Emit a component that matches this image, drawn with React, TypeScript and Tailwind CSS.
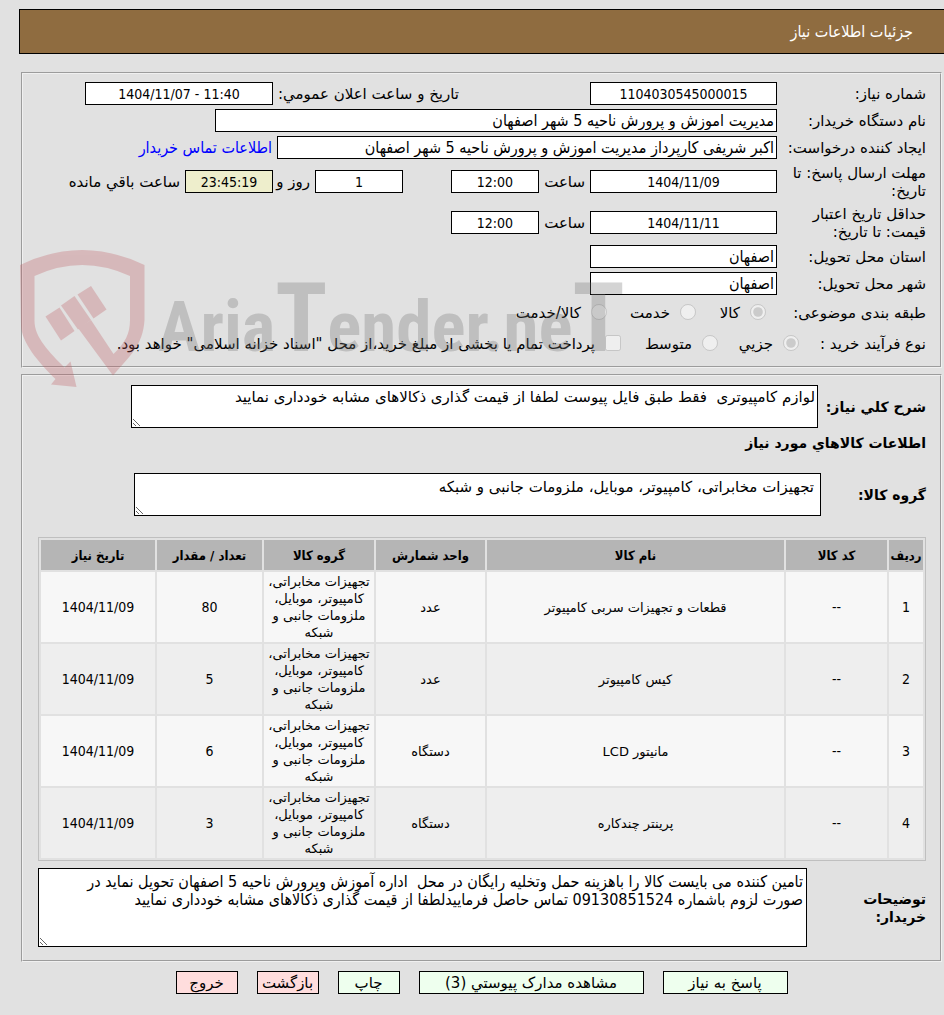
import type { ReactNode } from 'react';

interface NeedItem {
  id: number;
  code: string;
  name: string;
  unit: string;
  group: string;
  quantity: number;
  date: string;
}

const goodsGroup = 'تجهیزات مخابراتی، کامپیوتر، موبایل، ملزومات جانبی و شبکه';

const items: NeedItem[] = [
  { id: 1, code: '--', name: 'قطعات و تجهیزات سربی کامپیوتر', unit: 'عدد', group: goodsGroup, quantity: 80, date: '1404/11/09' },
  { id: 2, code: '--', name: 'کیس کامپیوتر', unit: 'عدد', group: goodsGroup, quantity: 5, date: '1404/11/09' },
  { id: 3, code: '--', name: 'مانیتور LCD', unit: 'دستگاه', group: goodsGroup, quantity: 6, date: '1404/11/09' },
  { id: 4, code: '--', name: 'پرینتر چندکاره', unit: 'دستگاه', group: goodsGroup, quantity: 3, date: '1404/11/09' }
];

const columns = [
  { title: 'ردیف', width: 'w-[34px]' },
  { title: 'کد کالا', width: 'w-[101px]' },
  { title: 'نام کالا', width: '' },
  { title: 'واحد شمارش', width: 'w-[109px]' },
  { title: 'گروه کالا', width: 'w-[110px]' },
  { title: 'تعداد / مقدار', width: 'w-[105px]' },
  { title: 'تاریخ نیاز', width: 'w-[114px]' }
];

const condensed = "font-['DejaVu_Sans_Condensed','DejaVu_Sans',sans-serif] text-[14px]";
const condensedLarge = "font-['DejaVu_Sans_Condensed','DejaVu_Sans',sans-serif] text-[16px]";
const boxClass = `h-[23px] border border-black bg-white px-[2px] leading-[18px] ${condensedLarge}`;
const numberClass = `h-[23px] border border-black bg-white text-center ${condensed}`;
const areaClass = 'block border border-black bg-white leading-[18px]';
const panelClass = 'mr-[2px] ml-[21px] border-2 [border-style:groove] border-[#f0f0f0] pr-[14px]';

function Row({ label, htmlFor, tall, children }: { label: string; htmlFor: string; tall?: boolean; children: ReactNode }) {
  return (
    <div className={`flex items-center ${tall ? 'h-[41px]' : 'h-[27px]'}`}>
      <label htmlFor={htmlFor} className="ml-[9px] w-[140px] shrink-0">{label}</label>
      {children}
    </div>
  );
}

function Option({ id, name, label, type = 'radio', checked = false, className = '' }: {
  id: string;
  name: string;
  label: string;
  type?: 'radio' | 'checkbox';
  checked?: boolean;
  className?: string;
}) {
  return (
    <span className={`flex shrink-0 items-center gap-[10px] ${className}`}>
      <input id={id} name={name} type={type} defaultChecked={checked} disabled className="mb-[2px] size-4 shrink-0" />
      <label htmlFor={id} className="whitespace-nowrap">{label}</label>
    </span>
  );
}

// Shield with gavel and the site name, laid over the form
function Watermark() {
  return (
    <svg
      className="pointer-events-none absolute top-[245px] left-[15px] h-[150px] w-[620px]"
      viewBox="15 245 620 150"
      direction="ltr"
      aria-hidden="true"
    >
      <g fill="rgb(192,92,98)" opacity="0.3">
        <path d="M20 265Q82 235 144.500 265V320C143 345 130 356 113 375.500L78 328L91 320L113.500 354C125 343 130 334 130 320V276Q82 254 34.500 276V320C34 337 49 352 64.500 367.500L70.500 361.500L76.500 387L51 384.500L55.500 379C39 363 21 342 21 325Z" />
        <path d="M45.500 316.500L59.500 307.500L74.500 331L61 340.500Z" />
        <path d="M61 305.500L74.500 296L91 320L78 329.500Z" />
        <path d="M77.500 294.500L91 286L106.500 309.500L93.500 318.500Z" />
      </g>
      <g fill="rgb(115,115,115)" opacity="0.3" fontWeight="700" fontFamily='"Roboto Condensed", Roboto, "Liberation Sans", sans-serif'>
        <text x="158" y="351" fontSize="71">
          Aria<tspan fontSize="96">T</tspan>ender.ne<tspan fontSize="96">T</tspan>
        </text>
      </g>
    </svg>
  );
}

export default function App() {
  return (
    <div
      dir="rtl"
      className="relative min-h-screen overflow-x-hidden bg-[#e1e1e1] pt-[9px] pb-5 font-['DejaVu_Sans',sans-serif] text-[15px] leading-[18px] text-black"
    >
      <header className="ml-[19px] flex h-[45px] items-center border-y border-l border-black bg-[#8f6c40] pr-[31px] text-white">
        <h1 className={condensedLarge}>جزئیات اطلاعات نیاز</h1>
      </header>

      {/* General information */}
      <section className={`${panelClass} mt-[18px] pt-[6px] pb-[7px]`}>
        <Row label="شماره نیاز:" htmlFor="needNo">
          <input id="needNo" readOnly defaultValue="1104030545000015" className={`${numberClass} w-[187px]`} />
          <label htmlFor="announce" className="mr-[131px] ml-[5px] w-[181px] whitespace-nowrap">تاریخ و ساعت اعلان عمومي:</label>
          <input id="announce" dir="ltr" readOnly defaultValue="1404/11/07 - 11:40" className={`${numberClass} w-[188px]`} />
        </Row>
        <Row label="نام دستگاه خریدار:" htmlFor="buyer">
          <input id="buyer" readOnly defaultValue="مدیریت اموزش و پرورش ناحیه 5 شهر اصفهان" className={`${boxClass} w-[562px]`} />
        </Row>
        <Row label="ایجاد کننده درخواست:" htmlFor="creator">
          <input id="creator" readOnly defaultValue="اکبر شریفی کارپرداز مدیریت اموزش و پرورش ناحیه 5 شهر اصفهان" className={`${boxClass} w-[500px]`} />
          <a href="#contact" className={`mr-[5px] text-[#0000ff] ${condensedLarge}`}>اطلاعات تماس خریدار</a>
        </Row>
        <Row label="مهلت ارسال پاسخ: تا تاریخ:" htmlFor="deadline" tall>
          <input id="deadline" dir="ltr" readOnly defaultValue="1404/11/09" className={`${numberClass} w-[187px]`} />
          <label htmlFor="deadlineTime" className="w-[51px] pr-[5px]">ساعت</label>
          <input id="deadlineTime" readOnly defaultValue="12:00" className={`${numberClass} w-[88px]`} />
          <input id="days" readOnly defaultValue="1" className={`${numberClass} mr-[48px] w-[88px]`} />
          <label htmlFor="days" className="w-[42px] pr-[5px] whitespace-nowrap">روز و</label>
          <input id="remaining" readOnly defaultValue="23:45:19" className={`h-[23px] w-[88px] border border-black bg-[#eeeecc] text-center ${condensed}`} />
          <label htmlFor="remaining" className="pr-[5px] whitespace-nowrap">ساعت باقي مانده</label>
        </Row>
        <Row label="حداقل تاریخ اعتبار قیمت: تا تاریخ:" htmlFor="validity" tall>
          <input id="validity" dir="ltr" readOnly defaultValue="1404/11/11" className={`${numberClass} w-[187px]`} />
          <label htmlFor="validityTime" className="w-[51px] pr-[5px]">ساعت</label>
          <input id="validityTime" readOnly defaultValue="12:00" className={`${numberClass} w-[88px]`} />
        </Row>
        <Row label="استان محل تحویل:" htmlFor="province">
          <input id="province" readOnly defaultValue="اصفهان" className={`${boxClass} w-[187px]`} />
        </Row>
        <Row label="شهر محل تحویل:" htmlFor="city">
          <input id="city" readOnly defaultValue="اصفهان" className={`${boxClass} w-[187px]`} />
        </Row>
        <div role="radiogroup" aria-label="طبقه بندی موضوعی" className="flex h-8 items-center">
          <span className="w-[160px]">طبقه بندی موضوعی:</span>
          <Option id="goods" name="category" label="کالا" checked className="w-[70px]" />
          <Option id="service" name="category" label="خدمت" className="w-[89px]" />
          <Option id="both" name="category" label="کالا/خدمت" />
        </div>
        <div role="radiogroup" aria-label="نوع فرآیند خرید" className="flex h-[30px] items-center">
          <span className="w-[127px]">نوع فرآیند خرید :</span>
          <Option id="small" name="process" label="جزیي" checked className="w-[81px]" />
          <Option id="medium" name="process" label="متوسط" className="w-[97px]" />
          <Option
            id="treasury"
            name="treasury"
            type="checkbox"
            label='پرداخت تمام یا بخشی از مبلغ خرید،از محل "اسناد خزانه اسلامی" خواهد بود.'
          />
        </div>
      </section>

      {/* Goods information */}
      <section className={`${panelClass} mt-[6px] pt-[9px] pb-[13px]`}>
        <div className="flex items-center">
          <label htmlFor="summary" className="w-[108px] shrink-0 text-[14px] font-bold whitespace-nowrap">شرح کلي نیاز:</label>
          <textarea
            id="summary"
            readOnly
            defaultValue="لوازم کامپیوتری  فقط طبق فایل پیوست لطفا از قیمت گذاری ذکالاهای مشابه خودداری نمایید"
            className={`${areaClass} ml-[108px] h-[43px] flex-1 p-[2px]`}
          />
        </div>
        <h2 className="mt-[6px] text-[14px] font-bold">اطلاعات کالاهاي مورد نیاز</h2>
        <div className="mt-[21px] flex items-center">
          <label htmlFor="group" className="w-[105px] shrink-0 text-[14px] font-bold">گروه کالا:</label>
          <textarea
            id="group"
            readOnly
            defaultValue={goodsGroup}
            className={`${areaClass} ml-[111px] h-[43px] flex-1 px-[6px] py-1`}
          />
        </div>

        <div className="mt-[21px] pl-[15px]">
          <table className="w-full table-fixed border-separate border-spacing-[2px] border border-[#bfbfbf] text-center text-[13px] leading-[17px]">
            <thead>
              <tr className="h-[30px]">
                {columns.map((column) => (
                  <th
                    key={column.title}
                    className={`${column.width} bg-[#b5b5b5] p-0 font-['DejaVu_Sans_Condensed','DejaVu_Sans',sans-serif] text-[13px] font-bold whitespace-nowrap`}
                  >
                    {column.title}
                  </th>
                ))}
              </tr>
            </thead>
            <tbody>
              {items.map((item) => (
                <tr key={item.id} className="h-[70px] odd:bg-[#f7f7f7] even:bg-[#eeeeee]">
                  <td className={condensed}>{item.id}</td>
                  <td className={condensed}>{item.code}</td>
                  <td>{item.name}</td>
                  <td>{item.unit}</td>
                  <td>{item.group}</td>
                  <td className={condensed}>{item.quantity}</td>
                  <td className={condensed}>{item.date}</td>
                </tr>
              ))}
            </tbody>
          </table>
        </div>

        <div className="mt-[7px] flex items-center pl-[15px]">
          <label htmlFor="notes" className="w-[119px] shrink-0 pl-10 text-[14px] font-bold">توضیحات خریدار:</label>
          <textarea
            id="notes"
            readOnly
            defaultValue="تامین کننده می بایست کالا را باهزینه حمل وتخلیه رایگان در محل  اداره آموزش وپرورش ناحیه 5 اصفهان تحویل نماید در صورت لزوم باشماره 09130851524 تماس حاصل فرماییدلطفا از قیمت گذاری ذکالاهای مشابه خودداری نمایید"
            className={`${areaClass} ${condensedLarge} h-[79px] flex-1 pr-[3px] pl-[14px] py-1`}
          />
        </div>
      </section>

      <div className="mt-[9px] ml-[19px] flex justify-center gap-[19px]">
        <button type="button" className="h-[23px] w-[125px] border border-black bg-[#eeffee]">پاسخ به نیاز</button>
        <button type="button" className="h-[23px] w-[225px] border border-black bg-[#eeffee]">مشاهده مدارک پیوستي (3)</button>
        <button type="button" className="h-[23px] w-[62px] border border-black bg-[#eeffee]">چاپ</button>
        <button type="button" className="h-[23px] w-[62px] border border-black bg-[#ffdddd]">بازگشت</button>
        <button type="button" className="h-[23px] w-[62px] border border-black bg-[#ffdddd]">خروج</button>
      </div>

      <Watermark />
    </div>
  );
}
